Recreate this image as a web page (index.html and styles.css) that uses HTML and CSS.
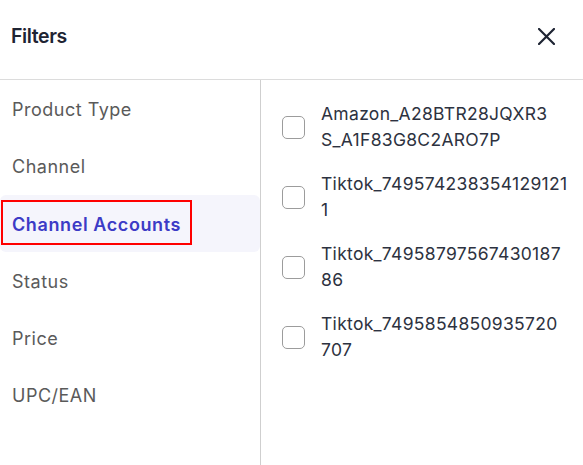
FILE: index.html
```html
<!DOCTYPE html>
<html lang="en">
<head>
<meta charset="utf-8">
<title>Filters</title>
<link rel="stylesheet" href="styles.css">
</head>
<body>
<div class="panel">
  <header class="header">
    <h2 class="title">Filters</h2>
    <button class="close" aria-label="Close">
      <svg width="17" height="17" viewBox="0 0 17 17" aria-hidden="true"><path d="M1 1 L16 16 M16 1 L1 16" stroke="#1e2433" stroke-width="2.2" stroke-linecap="square" fill="none"/></svg>
    </button>
  </header>
  <div class="body">
    <nav class="menu">
      <div class="menu-item">Product Type</div>
      <div class="menu-item">Channel</div>
      <div class="menu-item active"><span class="focus">Channel Accounts</span></div>
      <div class="menu-item">Status</div>
      <div class="menu-item">Price</div>
      <div class="menu-item">UPC/EAN</div>
    </nav>
    <div class="options">
      <label class="option"><span class="box"></span><span class="label">Amazon_A28BTR28JQXR3<br>S_A1F83G8C2ARO7P</span></label>
      <label class="option"><span class="box"></span><span class="label">Tiktok_749574238354129121<br>1</span></label>
      <label class="option"><span class="box"></span><span class="label">Tiktok_74958797567430187<br>86</span></label>
      <label class="option"><span class="box"></span><span class="label">Tiktok_7495854850935720<br>707</span></label>
    </div>
  </div>
</div>
</body>
</html>
```

FILE: styles.css
```css
* { box-sizing: border-box; }
html, body { margin: 0; padding: 0; background: #fff; }
body { font-family: Inter, "Open Sans", sans-serif; }
.panel { width: 583px; height: 465px; display: flex; flex-direction: column; overflow: hidden; }
.header {
  height: 80px;
  flex: none;
  border-bottom: 1px solid #dcdcdc;
  display: flex;
  justify-content: space-between;
  align-items: flex-start;
  padding: 24px 28px 0 11px;
}
.title {
  margin: 0;
  font-size: 19.5px;
  line-height: 24px;
  font-weight: 600;
  letter-spacing: -0.4px;
  color: #1e2433;
}
.close { margin-top: 4px; padding: 0; border: 0; background: none; width: 17px; height: 17px; display: block; }
.close svg { display: block; }
.body { flex: 1; display: flex; }
.menu { width: 261px; flex: none; border-right: 1px solid #cfcfcf; }
.menu-item {
  height: 57.25px;
  padding: 17px 0 0 12px;
  font-size: 18px;
  line-height: 25.25px;
  letter-spacing: 0.5px;
  color: #5a5a5a;
}
.menu-item.active {
  background: #f5f5fc;
  border-radius: 6px;
  padding: 5px 0 0 1px;
}
.focus {
  display: inline-block;
  border: 2px solid #ff0000;
  padding: 10px 9px 6px 9px;
  color: #3c3bc6;
  font-weight: 600;
  letter-spacing: 0.6px;
}
.options { flex: 1; padding: 21px 0 0 21px; display: flex; flex-direction: column; gap: 18px; }
.option { display: flex; align-items: center; gap: 16px; }
.box {
  flex: none;
  width: 23px;
  height: 23px;
  border: 1px solid #9c9c9c;
  border-radius: 5px;
  background: #fff;
}
.label {
  flex: 1;
  font-size: 17.5px;
  line-height: 26px;
  letter-spacing: 0.3px;
  color: #2d3240;
  white-space: nowrap;
}
```
